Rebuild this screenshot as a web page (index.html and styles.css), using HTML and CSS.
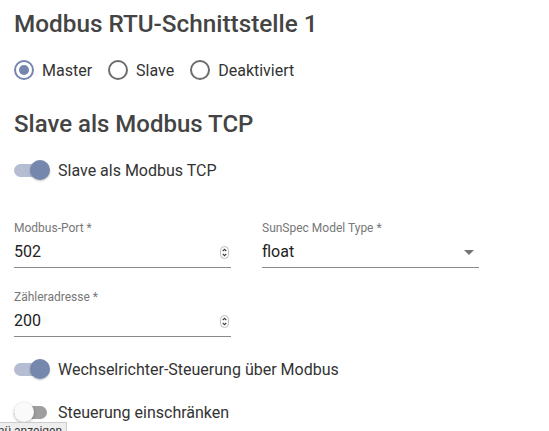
FILE: index.html
```html
<!DOCTYPE html>
<html lang="de">
<head>
<meta charset="utf-8">
<link rel="stylesheet" href="styles.css">
</head>
<body>
<div class="page">
  <h1 class="title">Modbus RTU-Schnittstelle 1</h1>
  <div class="radios">
    <label class="radio"><span class="rb checked"></span>Master</label>
    <label class="radio"><span class="rb"></span>Slave</label>
    <label class="radio"><span class="rb"></span>Deaktiviert</label>
  </div>
  <h2 class="title sub">Slave als Modbus TCP</h2>
  <div class="toggle-row first"><span class="switch on"><span class="knob"></span></span>Slave als Modbus TCP</div>
  <div class="fields">
    <div class="field">
      <div class="label">Modbus-Port *</div>
      <div class="value"><span>502</span>
        <svg class="spin" width="9" height="13" viewBox="0 0 9 13"><rect x="0.5" y="0.5" width="8" height="12" rx="4" fill="#fff" stroke="#bbb"/><path d="M2.7 5.2 L4.5 3.4 L6.3 5.2 M2.7 7.8 L4.5 9.6 L6.3 7.8" fill="none" stroke="#333" stroke-width="1.1"/></svg>
      </div>
    </div>
    <div class="field">
      <div class="label">SunSpec Model Type *</div>
      <div class="value"><span>float</span>
        <svg class="arrow" width="10" height="5" viewBox="0 0 10 5"><path d="M0 0 L10 0 L5 5 Z" fill="#757575"/></svg>
      </div>
    </div>
    <div class="field">
      <div class="label">Zähleradresse *</div>
      <div class="value"><span>200</span>
        <svg class="spin" width="9" height="13" viewBox="0 0 9 13"><rect x="0.5" y="0.5" width="8" height="12" rx="4" fill="#fff" stroke="#bbb"/><path d="M2.7 5.2 L4.5 3.4 L6.3 5.2 M2.7 7.8 L4.5 9.6 L6.3 7.8" fill="none" stroke="#333" stroke-width="1.1"/></svg>
      </div>
    </div>
  </div>
  <div class="toggle-row second"><span class="switch on"><span class="knob"></span></span>Wechselrichter-Steuerung über Modbus</div>
  <div class="toggle-row third"><span class="switch off"><span class="knob"></span></span>Steuerung einschränken</div>
</div>
<div class="tooltip">Menü anzeigen</div>
</body>
</html>
```
FILE: styles.css
```css
html, body {
  margin: 0;
  padding: 0;
  background: #fff;
  overflow: hidden;
  height: 431px;
}
body {
  font-family: Roboto, "Liberation Sans", sans-serif;
  color: #333;
  position: relative;
}
.page {
  padding: 8px 14px 0 14px;
}
.title {
  margin: 0;
  font-size: 24.3px;
  font-weight: 500;
  line-height: 32px;
  color: #444;
}
.sub {
  margin-top: 28px;
  font-size: 24px;
}
.radios {
  display: flex;
  gap: 16px;
  margin-top: 20px;
  height: 20px;
  align-items: center;
  font-size: 16px;
}
.radio {
  display: flex;
  align-items: center;
  gap: 8px;
  color: #333;
}
.rb {
  width: 20px;
  height: 20px;
  box-sizing: border-box;
  border: 2px solid #6d6d6d;
  border-radius: 50%;
  display: flex;
  align-items: center;
  justify-content: center;
}
.rb.checked {
  border-color: #7587ad;
}
.rb.checked::after {
  content: "";
  width: 10px;
  height: 10px;
  border-radius: 50%;
  background: #7587ad;
}
.toggle-row {
  display: flex;
  align-items: center;
  gap: 8px;
  font-size: 16px;
  height: 22px;
  color: #333;
}
.first { margin-top: 19px; }
.second { margin-top: 21px; }
.third { margin-top: 21px; }
.switch {
  position: relative;
  width: 36px;
  height: 22px;
  display: block;
}
.switch::before {
  content: "";
  position: absolute;
  left: 0;
  top: 5px;
  width: 33px;
  height: 13px;
  border-radius: 7px;
  background: #b4bdd1;
}
.switch .knob {
  position: absolute;
  top: 1px;
  width: 20px;
  height: 20px;
  border-radius: 50%;
  background: #7587ad;
  box-shadow: 0 1px 2px rgba(0,0,0,0.25);
}
.switch.on .knob { left: 16px; }
.switch.off::before { background: #9e9e9e; }
.switch.off .knob { left: 0; background: #fafafa; box-shadow: 0 1px 3px rgba(0,0,0,0.3); }
.fields {
  display: grid;
  grid-template-columns: 217px 217px;
  column-gap: 31px;
  row-gap: 22px;
  margin-top: 40px;
}
.label {
  font-size: 12px;
  line-height: 14px;
  color: #777;
}
.value {
  display: flex;
  align-items: center;
  justify-content: space-between;
  font-size: 16px;
  line-height: 20px;
  color: #222;
  margin-top: 7px;
  padding-bottom: 5px;
  border-bottom: 1px solid #8a8a8a;
}
.spin { margin-right: 2px; }
.arrow { margin-right: 5px; }
.tooltip {
  position: absolute;
  left: -24px;
  top: 422px;
  font-size: 12px;
  line-height: 14px;
  padding: 1px 4px;
  background: #eee;
  border: 1px solid #ccc;
  color: #333;
}
```
